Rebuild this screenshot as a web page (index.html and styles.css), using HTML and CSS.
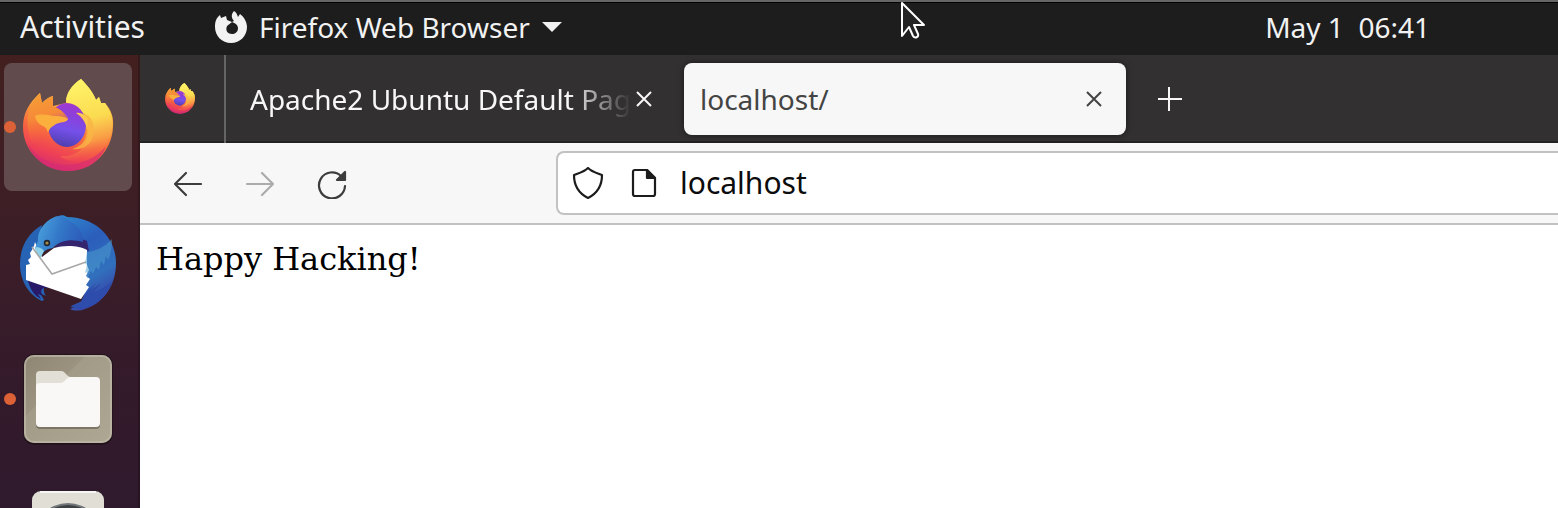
FILE: index.html
```html
<!DOCTYPE html>
<html lang="en">
<head>
  <meta charset="UTF-8">
  <title>localhost/</title>
  <meta name="viewport" content="width=device-width, initial-scale=1.0">
  <link rel="stylesheet" href="styles.css">
</head>
<body>
  <!-- Shared firefox logo, used in the dock and the pinned tab -->
  <svg class="defs" width="0" height="0" aria-hidden="true">
    <defs>
      <linearGradient id="fxBody" x1="0.75" y1="0.1" x2="0.45" y2="1">
        <stop offset="0" stop-color="#ffe14d"/>
        <stop offset="0.35" stop-color="#fba63c"/>
        <stop offset="0.62" stop-color="#f8663f"/>
        <stop offset="0.85" stop-color="#ee4056"/>
        <stop offset="1" stop-color="#d92f6c"/>
      </linearGradient>
      <linearGradient id="fxFlame" x1="0.3" y1="0" x2="0.45" y2="1">
        <stop offset="0" stop-color="#fff56a"/>
        <stop offset="0.5" stop-color="#fbdb50"/>
        <stop offset="0.78" stop-color="#f99a45"/>
        <stop offset="1" stop-color="#f5534a" stop-opacity="0"/>
      </linearGradient>
      <linearGradient id="fxGlobe" x1="0.6" y1="0" x2="0.4" y2="1">
        <stop offset="0" stop-color="#a137cf"/>
        <stop offset="0.3" stop-color="#8a41dc"/>
        <stop offset="0.6" stop-color="#7650ea"/>
        <stop offset="1" stop-color="#4d3fae"/>
      </linearGradient>
      <linearGradient id="fxFace" x1="0" y1="0" x2="0.2" y2="1">
        <stop offset="0" stop-color="#f5a135"/>
        <stop offset="0.5" stop-color="#f68a38"/>
        <stop offset="1" stop-color="#f5603f" stop-opacity="0"/>
      </linearGradient>
      <symbol id="firefox" viewBox="0 0 96 96">
        <path fill="url(#fxBody)" d="M61 0c6 6 12 13 15 21l3-3 2 6 4 0c6 7 9 14 8 24-1 24-20 44-45 44S3 72 3 48c0-14 6-24 17-34l2 10c3-3 7-6 11-7v10l13-3C46 14 52 6 61 0z"/>
        <path fill="url(#fxFlame)" d="M61 0c6 6 12 13 15 21l3-3 2 6 4 0c6 9 8 15 7 25-2 15-10 26-23 32-8 3-22 2-29-4 16 2 27-8 28-23 0-12-9-23-22-31C46 14 52 6 61 0z"/>
        <path fill="#f9b545" opacity="0.8" d="M60 33c10 2 14 9 14 18 0 13-11 21-22 19 9-2 15-9 15-19 0-7-2-12-7-18z"/>
        <ellipse fill="url(#fxGlobe)" cx="47" cy="46" rx="19" ry="22"/>
        <path fill="#fcc84d" d="M56 34c4-1 9 1 12 6l-1 11c-1-7-4-11-7-14z"/>
        <path fill="url(#fxFace)" d="M20 14l2 10c3-3 7-6 11-7v10c6 2 11 6 15 12 0 3-6 3-11 4-4 1-8 6-8 11 0 4 2 8 5 11H12C3 41 9 25 20 14z"/>
        <path fill="#fbb03d" d="M15 37c5-3 14-1 18 0 6 0 10 0 15 3-1 4-9 3-12 5-4 3-7 4-8 9-1-5-3-6-7-8-3-2-5-4-6-9z"/>
        <path fill="#d32b75" opacity="0.6" d="M8 65c10 17 30 23 46 20 14-2 25-9 32-18-6 16-20 25-38 25S14 82 8 65z"/>
      </symbol>
    </defs>
  </svg>

  <header class="topbar">
    <button class="top-item activities">Activities</button>
    <button class="top-item app-menu">
      <svg class="app-icon" viewBox="0 0 32 34" aria-hidden="true">
        <path fill="#f2f2f2" d="M19 1c2 1 3 3 4 6l2-3c4 3 7 8 7 13 0 9-7 16-16 16S0 26 0 17C0 12 1 8 5 5l1 3 5-2 1 4 5 2-5 4c-2 5 1 8 5 8 3 0 6-2 6-6 0-3-3-5-6-6l2-1c-3-3-3-7 0-10z"/>
      </svg>
      <span>Firefox Web Browser</span>
      <svg class="caret" viewBox="0 0 20 10" aria-hidden="true"><path fill="#f2f2f2" d="M0 0h20L10 10z"/></svg>
    </button>
    <button class="top-item clock">May 1&nbsp; 06:41</button>
    <svg class="cursor" viewBox="0 0 26 38" aria-hidden="true">
      <path fill="#242424" stroke="#ffffff" stroke-width="2" stroke-linejoin="round" d="M2 1v33l7-9 4 9c2 3 6 1 5-2l-4-9h10z"/>
    </svg>
  </header>

  <div class="desktop">
    <nav class="dock" aria-label="Dock">
      <button class="dock-item active running" aria-label="Firefox">
        <svg viewBox="0 0 96 96" aria-hidden="true"><use href="#firefox"/></svg>
      </button>
      <button class="dock-item" aria-label="Thunderbird">
        <svg viewBox="0 0 96 96" aria-hidden="true">
          <defs>
            <linearGradient id="tbBody" x1="0.2" y1="0" x2="0.6" y2="1">
              <stop offset="0" stop-color="#2f83cc"/>
              <stop offset="0.35" stop-color="#2b5dbb"/>
              <stop offset="0.7" stop-color="#3170bd"/>
              <stop offset="1" stop-color="#3a3da5"/>
            </linearGradient>
            <linearGradient id="tbHead" x1="0" y1="0.3" x2="1" y2="0.6">
              <stop offset="0" stop-color="#4ba3de"/>
              <stop offset="0.5" stop-color="#3377c8"/>
              <stop offset="1" stop-color="#2c5ab8"/>
            </linearGradient>
          </defs>
          <path fill="#2663b4" d="M22 10C8 18 0 32 0 49c0 17 9 31 22 37l2-1-4-7 6 3c-3-4-3-9 0-12l-8-34z"/>
          <path fill="#281a68" d="M7 62l33 10-16 1c-4 1-3 5-1 8l-5-2 3 5C13 80 9 72 7 62z"/>
          <path fill="url(#tbBody)" d="M35 4c3-4 8-5 12-2 28 0 49 20 49 46 0 22-12 40-31 46-5 2-11 2-15 0l6-2-5-1 9-4c4-2 5-5 3-9l4-30z"/>
          <path fill="#35256f" d="M35 32c9-10 24-10 32-6l2 10c-8-4-20-5-30 1z"/>
          <path fill="#fff" d="M15 27c-1 5-3 8-5 11l1 4-3 3 2 4-4 1v15l55 19 8-12-3-2 4-6-4-3 3-6-2-5V35c-8-5-24-5-33-2L22 42l-4-8z"/>
          <path fill="url(#tbHead)" d="M40 0C25 4 17 16 18 26l-3 7 6 9c1-5 5-8 12-9 8-9 20-9 30-6 0-7-3-15-12-20-5-4-9-6-14-6l3-1z"/>
          <path fill="#8fd1e8" d="M16 32c3 0 6 1 8 4l-2 4-2 4-3-5-2-3z"/>
          <path fill="none" stroke="#a8a8a8" stroke-width="1.6" d="M12 32l20 27 34-12"/>
          <circle cx="27" cy="28" r="3.2" fill="#20242c"/>
          <circle cx="27" cy="28" r="1.6" fill="#a38b46"/>
          <path fill="#4d9fd0" opacity="0.5" d="M67 37c9-1 18-5 25-13 0 9-1 15-4 21l-2-4-2 9-3-4-2 9-3-3-3 7-2-3-4 8v-7l-2 1 2-8-2-2z"/>
          <path fill="#2d4cab" d="M92 66c-7 7-13 9-18 11l7-9-11 8 6-8c-8 7-13 12-15 19l-11 5 10 2c15-2 27-12 32-28z"/>
        </svg>
      </button>
      <button class="dock-item running" aria-label="Files">
        <svg viewBox="0 0 96 96" aria-hidden="true">
          <defs>
            <linearGradient id="filesBg" x1="0" y1="0" x2="1" y2="1">
              <stop offset="0" stop-color="#8e8672"/>
              <stop offset="0.35" stop-color="#9b937f"/>
              <stop offset="0.36" stop-color="#a29b88"/>
              <stop offset="1" stop-color="#aea793"/>
            </linearGradient>
          </defs>
          <rect x="3" y="3" width="90" height="91" rx="11" fill="#1c1118" opacity="0.7"/>
          <rect x="4" y="4" width="88" height="88" rx="10" fill="url(#filesBg)"/>
          <rect x="5" y="5" width="86" height="86" rx="9" fill="none" stroke="#c4beae" stroke-width="2" opacity="0.6"/>
          <path fill="#6b6455" opacity="0.7" d="M16 32h64v42q0 4-4 4H20q-4 0-4-4z"/>
          <path fill="#e2dfd6" d="M16 36V24q0-4 4-4h21c5 0 5 6 10 6v10z"/>
          <path fill="#f9f8f6" d="M16 34q1-2 4-2h20c6 0 5-6 11-6h25q4 0 4 4v42q0 4-4 4H20q-4 0-4-4z"/>
        </svg>
      </button>
      <button class="dock-item" aria-label="Rhythmbox">
        <svg viewBox="0 0 96 96" aria-hidden="true">
          <rect x="12" y="4" width="72" height="90" rx="9" fill="#e0ded5"/>
          <path d="M20 5h56" stroke="#f7f6f2" stroke-width="2"/>
          <circle cx="48" cy="51" r="35" fill="#74777a"/>
          <circle cx="48" cy="51" r="33" fill="#3d4144"/>
          <circle cx="48" cy="51" r="14" fill="#1e2022"/>
        </svg>
      </button>
    </nav>

    <main class="browser">
      <div class="tabs">
        <button class="pinned-tab" aria-label="Firefox">
          <svg viewBox="0 0 96 96" aria-hidden="true"><use href="#firefox"/></svg>
        </button>
        <div class="tab">
          <span class="tab-title faded">Apache2 Ubuntu Default Page</span>
          <button class="icon-btn" aria-label="Close tab">
            <svg viewBox="0 0 16 16" aria-hidden="true"><path d="M1 1l14 14M15 1L1 15"/></svg>
          </button>
        </div>
        <div class="tab selected">
          <span class="tab-title">localhost/</span>
          <button class="icon-btn" aria-label="Close tab">
            <svg viewBox="0 0 16 16" aria-hidden="true"><path d="M1 1l14 14M15 1L1 15"/></svg>
          </button>
        </div>
        <button class="icon-btn new-tab" aria-label="New tab">
          <svg viewBox="0 0 24 24" aria-hidden="true"><path d="M11 0v24M0 12h24"/></svg>
        </button>
      </div>

      <div class="toolbar">
        <button class="nav-btn" aria-label="Back">
          <svg viewBox="0 0 32 32" aria-hidden="true"><path d="M29 17H3M14 6L3 17l11 11"/></svg>
        </button>
        <button class="nav-btn" aria-label="Forward" disabled>
          <svg viewBox="0 0 32 32" aria-hidden="true"><path d="M3 17h26M18 6l11 11-11 11"/></svg>
        </button>
        <button class="nav-btn" aria-label="Reload">
          <svg viewBox="0 0 32 32" aria-hidden="true">
            <path d="M25 9a13 13 0 1 0 4 10"/>
            <path class="solid" d="M29 5v8h-8z"/>
          </svg>
        </button>
        <label class="url-bar">
          <svg viewBox="0 0 32 32" aria-hidden="true"><path d="M16 1c4 4 9 5 14 7 0 11-4 18-14 23C6 26 2 19 2 8c5-2 10-3 14-7z"/></svg>
          <svg viewBox="0 0 32 32" aria-hidden="true">
            <path d="M7 3h12l8 8v16q0 2-2 2H7q-2 0-2-2V5q0-2 2-2z"/>
            <path class="solid" d="M19 3l8 8h-8z"/>
          </svg>
          <input type="text" value="localhost" aria-label="Address">
        </label>
      </div>

      <div class="page">Happy Hacking!</div>
    </main>
  </div>
</body>
</html>
```
FILE: styles.css
```css
* {
  box-sizing: border-box;
}

body {
  margin: 0;
  height: 100vh;
  overflow: hidden;
  display: flex;
  flex-direction: column;
  font-family: "Noto Sans", "Open Sans", sans-serif;
  font-size: 28px;
  line-height: 36px;
}

button {
  margin: 0;
  padding: 0;
  border: none;
  background: none;
  color: inherit;
  font: inherit;
}

svg {
  display: block;
  flex: none;
}

.defs {
  position: absolute;
}

/* GNOME top bar */
.topbar {
  position: relative;
  flex: none;
  display: flex;
  align-items: center;
  height: 55px;
  padding: 0 128px 4px 20px;
  border-top: 2px solid #666;
  background: #1d1d1d;
  box-shadow: inset 0 1px #000;
  color: #f2f2f2;
}

.activities {
  font-size: 30px;
}

.app-menu {
  display: flex;
  align-items: center;
  gap: 12px;
  margin-left: 70px;
}

.app-icon {
  width: 32px;
  height: 34px;
}

.caret {
  width: 20px;
  height: 10px;
}

.clock {
  margin-left: auto;
}

.cursor {
  position: absolute;
  top: 0;
  left: 900px;
  width: 26px;
  height: 38px;
}

.desktop {
  flex: 1;
  display: flex;
  min-height: 0;
}

/* Dock */
.dock {
  flex: none;
  display: flex;
  flex-direction: column;
  gap: 8px;
  width: 140px;
  padding: 8px 8px 8px 4px;
  overflow: hidden;
  background: linear-gradient(#43201f, #3c1e27 40%, #331a2b 75%, #2f1a2d);
  box-shadow: inset -2px 0 rgba(0, 0, 0, 0.2);
}

.dock-item {
  position: relative;
  flex: none;
  padding: 16px;
  border-radius: 8px;
}

.dock-item svg {
  width: 96px;
  height: 96px;
}

.dock-item.active {
  background: #624b4c;
}

.dock-item.running::before {
  content: "";
  position: absolute;
  left: 0;
  top: 58px;
  width: 12px;
  height: 12px;
  border-radius: 50%;
  background: #dd6136;
}

/* Browser window */
.browser {
  flex: 1;
  display: flex;
  flex-direction: column;
  min-width: 0;
  background: #fff;
}

.tabs {
  flex: none;
  display: flex;
  align-items: center;
  gap: 8px;
  height: 88px;
  background: #323031;
  box-shadow: inset 0 -2px #222;
  color: #f7f7f7;
}

.pinned-tab {
  align-self: stretch;
  padding: 0 28px 0 24px;
  border-right: 2px solid #656565;
}

.pinned-tab svg {
  width: 32px;
  height: 32px;
}

.tab {
  flex: 0 1 442px;
  display: flex;
  align-items: center;
  gap: 4px;
  min-width: 0;
  height: 72px;
  padding: 0 24px 0 16px;
  border-radius: 8px;
}

.tab.selected {
  background: #f7f7f7;
  color: #444;
  box-shadow: 0 0 6px rgba(0, 0, 0, 0.5);
}

.tab-title {
  flex: 1;
  min-width: 0;
  overflow: hidden;
  white-space: nowrap;
}

.tab-title.faded {
  -webkit-mask-image: linear-gradient(to left, transparent, #000 64px);
  mask-image: linear-gradient(to left, transparent, #000 64px);
}

.icon-btn svg {
  width: 16px;
  height: 16px;
  fill: none;
  stroke: currentColor;
  stroke-width: 2;
}

.new-tab {
  padding: 0 24px;
}

.new-tab svg {
  width: 24px;
  height: 24px;
}

.toolbar {
  flex: none;
  display: flex;
  align-items: center;
  gap: 40px;
  height: 82px;
  padding-left: 32px;
  background: #f7f7f7;
  border-bottom: 2px solid #c2c2c2;
}

.nav-btn svg,
.url-bar svg {
  width: 32px;
  height: 32px;
  fill: none;
  stroke: #3c3c3c;
  stroke-width: 2.2;
  stroke-linecap: round;
  stroke-linejoin: round;
}

.nav-btn:disabled {
  opacity: 0.4;
}

.nav-btn .solid {
  fill: #3c3c3c;
}

.url-bar {
  flex: 1;
  display: flex;
  align-items: center;
  gap: 24px;
  height: 64px;
  margin-left: 168px;
  padding-left: 14px;
  background: #fff;
  border: 2px solid #c2c2c2;
  border-right: none;
  border-radius: 8px 0 0 8px;
}

.url-bar svg {
  stroke: #1c1c1c;
}

.url-bar .solid {
  fill: #1c1c1c;
}

.url-bar input {
  flex: 1;
  min-width: 0;
  margin-left: -4px;
  padding: 0;
  border: none;
  outline: none;
  background: none;
  color: #0c0c0d;
  font: inherit;
  font-size: 30px;
}

.page {
  padding: 16px;
  color: #000;
  font-family: "DejaVu Serif", serif;
  font-size: 32px;
}
```
